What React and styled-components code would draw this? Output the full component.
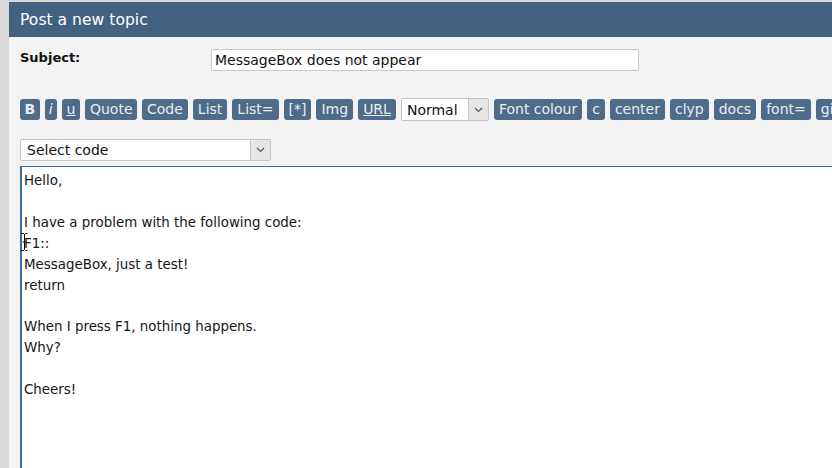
import React from "react";
import styled, { createGlobalStyle } from "styled-components";

const Global = createGlobalStyle`
  html, body { margin: 0; padding: 0; background: #d9d9d9; }
  body { font-family: "DejaVu Sans", Verdana, sans-serif; overflow: hidden; }
  #root { height: 468px; }
`;

const Panel = styled.div`
  margin: 2px 0 0 9px;
  height: 466px;
  background: #f3f3f3;
  display: flex;
  flex-direction: column;
  overflow: hidden;
`;

const Header = styled.div`
  height: 35px;
  flex: none;
  background: #426282;
  color: #ffffff;
  font-size: 15.6px;
  display: flex;
  align-items: center;
  padding-left: 11px;
`;

const Body = styled.div`
  padding: 0 0 0 11px;
  display: flex;
  flex-direction: column;
  flex: 1;
  min-height: 0;
`;

const SubjectRow = styled.div`
  display: flex;
  margin-top: 12px;
`;

const Label = styled.div`
  width: 191px;
  font-size: 13px;
  font-weight: bold;
  color: #111;
  padding-top: 1px;
`;

const TextInput = styled.div`
  box-sizing: border-box;
  width: 428px;
  height: 22px;
  background: #fff;
  border: 1px solid #c8c8c8;
  border-radius: 2px;
  font-size: 14px;
  line-height: 21px;
  padding-left: 3px;
  color: #111;
`;

const Toolbar = styled.div`
  display: flex;
  align-items: center;
  gap: 5px;
  margin-top: 27px;
  white-space: nowrap;
`;

const Btn = styled.div`
  flex: none;
  height: 21px;
  padding: 0 ${(p) => p.$pad ?? 5}px;
  background: #4e6c8a;
  color: #e9eef3;
  border-radius: 3px;
  font-size: 14px;
  line-height: 21px;
  font-weight: ${(p) => (p.$bold ? "bold" : "normal")};
  font-style: ${(p) => (p.$italic ? "italic" : "normal")};
  text-decoration: ${(p) => (p.$underline ? "underline" : "none")};
`;

const SelectBox = styled.div`
  flex: none;
  display: flex;
  width: ${(p) => p.$w}px;
  height: ${(p) => p.$h}px;
  background: #fff;
  border: 1px solid #c4c4c4;
  border-radius: 2px;
  box-sizing: border-box;
  font-size: 14px;
  color: #111;
`;

const SelectText = styled.div`
  flex: 1;
  padding-left: ${(p) => p.$pl}px;
  display: flex;
  align-items: center;
`;

const Arrow = styled.div`
  width: 19px;
  background: #e6e6e6;
  border-left: 1px solid #c4c4c4;
  display: flex;
  align-items: center;
  justify-content: center;
`;

const CodeRow = styled.div`
  margin-top: 18px;
`;

const Editor = styled.div`
  position: relative;
  margin-top: 5px;
  flex: 1;
  background: #fff;
  border-top: 1px solid #3f6a94;
  border-left: 2px solid #3f6a94;
  padding: 4px 0 0 2px;
  font-size: 13.4px;
  line-height: 20.9px;
  color: #151515;
  white-space: pre;
`;

const Cursor = styled.svg`
  position: absolute;
  left: -1px;
  top: 66px;
`;

const ArrowIcon = () => (
  <svg width="9" height="6" viewBox="0 0 9 6">
    <path d="M1 1 L4.5 4.5 L8 1" fill="none" stroke="#555" strokeWidth="1.2" />
  </svg>
);

const text = `Hello,

I have a problem with the following code:
F1::
MessageBox, just a test!
return

When I press F1, nothing happens.
Why?

Cheers!`;

export default function App() {
  return (
    <>
      <Global />
      <Panel>
        <Header>Post a new topic</Header>
        <Body>
          <SubjectRow>
            <Label>Subject:</Label>
            <TextInput>MessageBox does not appear</TextInput>
          </SubjectRow>
          <Toolbar>
            <Btn $bold $pad={4.5}>B</Btn>
            <Btn $italic $pad={4}>i</Btn>
            <Btn $underline $pad={5}>u</Btn>
            <Btn $pad={4.5}>Quote</Btn>
            <Btn>Code</Btn>
            <Btn>List</Btn>
            <Btn>List=</Btn>
            <Btn>[*]</Btn>
            <Btn>Img</Btn>
            <Btn $underline>URL</Btn>
            <SelectBox $w={88} $h={23}>
              <SelectText $pl={5}>Normal</SelectText>
              <Arrow><ArrowIcon /></Arrow>
            </SelectBox>
            <Btn>Font colour</Btn>
            <Btn>c</Btn>
            <Btn>center</Btn>
            <Btn>clyp</Btn>
            <Btn>docs</Btn>
            <Btn>font=</Btn>
            <Btn>gist</Btn>
          </Toolbar>
          <CodeRow>
            <SelectBox $w={251} $h={22}>
              <SelectText $pl={6}>Select code</SelectText>
              <Arrow><ArrowIcon /></Arrow>
            </SelectBox>
          </CodeRow>
          <Editor>
            {text}
            <Cursor width="7" height="18" viewBox="0 0 7 18">
              <path d="M0.5 0.5 H2.5 L3.5 1.5 L4.5 0.5 H6.5 M3.5 1.5 V16.5 M0.5 17.5 H2.5 L3.5 16.5 L4.5 17.5 H6.5 M1.5 9 H5.5" fill="none" stroke="#000" strokeWidth="1" />
            </Cursor>
          </Editor>
        </Body>
      </Panel>
    </>
  );
}
